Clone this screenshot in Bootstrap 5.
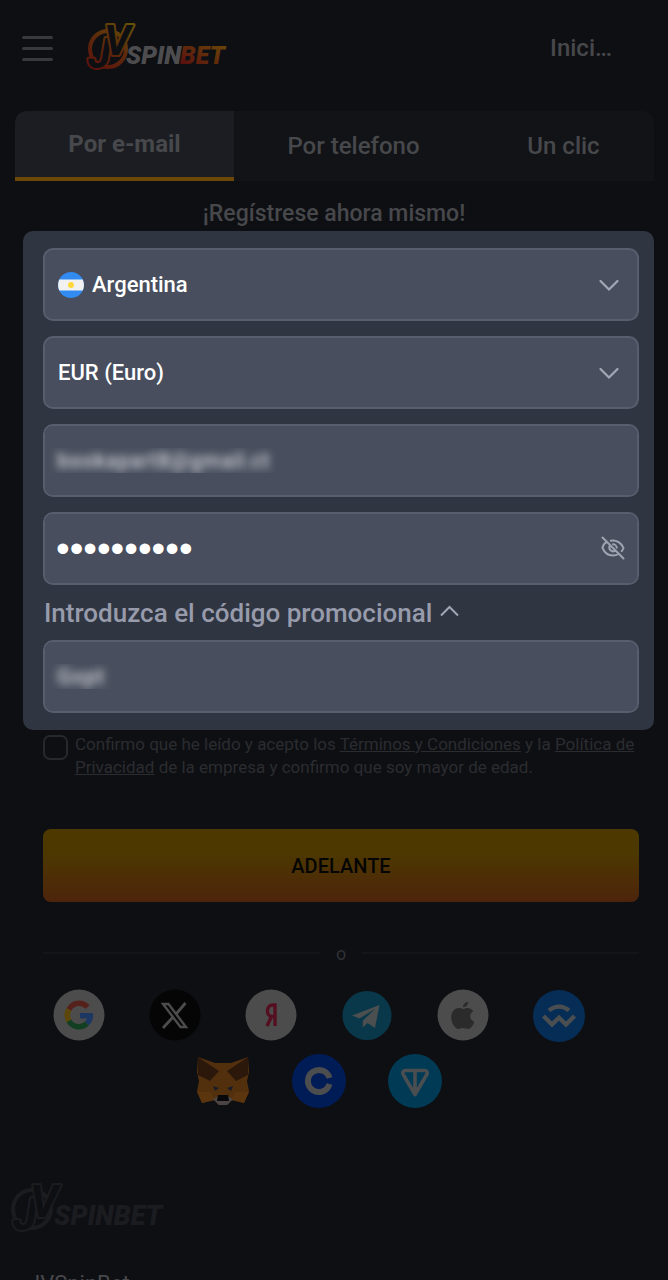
<!DOCTYPE html>
<html lang="es">
<head>
<meta charset="utf-8">
<meta name="viewport" content="width=device-width, initial-scale=1">
<title>JVSpinBet - Registro</title>
<link href="https://cdn.jsdelivr.net/npm/bootstrap@5.3.0/dist/css/bootstrap.min.css" rel="stylesheet">
<style>
  body { background: #0e0f13; font-family: Roboto, "Liberation Sans", sans-serif; color: #47484b; }
  .page { height: 100vh; overflow: hidden; }
  .top-bar { height: 96px; padding: 0 56px 0 22px; }
  .burger span { display: block; width: 31px; height: 3px; border-radius: 2px; background: #38393d; }
  .burger { gap: 8px; }
  .brand-link { margin-left: 32px; line-height: 0; }
  .login-link { color: #47484b; font-size: 24px; font-weight: 500; }
  .reg-tabs { margin: 15px 14px 0 15px; height: 70px; background: #121317; border-radius: 12px 12px 0 0; }
  .reg-tabs .nav-link { color: #47484b; background: transparent; font-size: 24px; font-weight: 500; border: 0; border-radius: 0; padding: 0; }
  .reg-tabs .nav-link.active { background: #1b1d22; border-bottom: 4px solid #6c4708; border-radius: 12px 0 0 0; font-weight: 700; }
  .tab-a { flex: 219 1 0; } .tab-b { flex: 239 1 0; } .tab-c { flex: 181 1 0; }
  .lead-line { font-size: 23px; font-weight: 500; line-height: 26px; margin: 20px 0 4px; }
  .panel { margin: 0 14px 0 23px; padding: 17px 15px 17px 20px; border-radius: 10px; background: #2f3541; }
  .field-stack { display: grid; gap: 15px; }
  .field { height: 73px; background-color: #484e5d; border: 2px solid #585e6e; border-radius: 10px; color: #fff; font-size: 22px; font-weight: 500; padding: 0 13px; }
  .field:focus { background-color: #484e5d; color: #fff; }
  select.field { background-image: url("data:image/svg+xml,%3Csvg xmlns='http://www.w3.org/2000/svg' viewBox='0 0 20 20'%3E%3Cpath d='M1.500 6l8.500 8.500L18.500 6' fill='none' stroke='%23a3a7b5' stroke-width='2.200' stroke-linecap='round'/%3E%3C/svg%3E"); background-size: 20px 20px; background-position: right 18px center; }
  select.with-flag { padding-left: 47px; }
  .flag { left: 15px; top: 24px; pointer-events: none; }
  .veiled, .veiled:focus { color: transparent; text-shadow: 0 0 9px #d5d7dc; padding-left: 0; text-indent: 12px; line-height: 69px; }
  .dots { font-family: "Liberation Sans", sans-serif; font-size: 39px; font-weight: 400; padding-left: 11px; }
  .eye-btn { right: 14px; top: 24px; line-height: 0; }
  .promo-btn { color: #979bab; font-size: 26px; font-weight: 500; line-height: 30px; gap: 8px; margin: 13px 0 12px 1px; }
  .below { margin: 0 29px 0 43px; }
  .terms { font-size: 17px; line-height: 23px; padding-top: 3px; color: #2b2c30; }
  .terms a { color: #2b2c30; }
  .form-check-input.terms-box { width: 25px; height: 25px; margin: 5px 7px 0 0; background-color: transparent; border: 2px solid #27282c; border-radius: 7px; }
  .go-btn { height: 73px; margin-top: 50px; border: 0; border-radius: 8px; background: linear-gradient(#4d3900 30%, #4d240c); color: #050505; font-size: 20px; font-weight: 500; }
  .or-line { margin-top: 38px; gap: 16px; height: 26px; font-size: 18px; color: #303135; }
  .or-line i { height: 2px; background: #141519; }
  .socials { margin: 16px 61px 0 30px; }
  .socials a { width: 96px; height: 66px; display: flex; align-items: center; justify-content: center; }
  .foot { padding: 65px 10px 0; }
  .foot p { font-size: 22px; line-height: 26px; margin: 32px 0 0 18px; }
</style>
</head>
<body>
<svg width="0" height="0" class="position-absolute" aria-hidden="true">
  <defs>
    <linearGradient id="fire" gradientUnits="userSpaceOnUse" x1="8" y1="56" x2="42" y2="4"><stop offset="0" stop-color="#5c100d"/><stop offset=".5" stop-color="#5d2a0b"/><stop offset="1" stop-color="#675208"/></linearGradient>
    <linearGradient id="bet" x1="0" y1="1" x2="1" y2="0"><stop offset=".15" stop-color="#5b120e"/><stop offset="1" stop-color="#6a4c08"/></linearGradient>
  </defs>
</svg>
<div class="page">
  <header class="top-bar d-flex align-items-center">
    <button class="burger btn p-0 border-0 d-flex flex-column" type="button" aria-label="Menú"><span></span><span></span><span></span></button>
    <a href="#" class="brand-link d-block" aria-label="JVSpinBet">
      <svg width="150" height="64" viewBox="0 0 150 64">
        <circle cx="23" cy="33" r="18" fill="none" stroke="url(#fire)" stroke-width="4"/>
        <g font-family="Roboto, sans-serif" font-style="italic">
          <g font-size="42" font-weight="700" fill="#0e0f13" stroke="url(#fire)" stroke-width="4" stroke-linejoin="round" paint-order="stroke"><text x="3" y="52">J</text><text x="19" y="39">V</text></g>
          <text x="41" y="48" font-size="25" font-weight="900" fill="#4d4d50">SPIN</text>
          <text x="95" y="48" font-size="25" font-weight="900" fill="url(#bet)">BET</text>
        </g>
      </svg>
    </a>
    <a href="#" class="login-link ms-auto text-decoration-none">Inici…</a>
  </header>

  <nav class="reg-tabs nav flex-nowrap" role="tablist">
    <button class="nav-link active tab-a" type="button" role="tab">Por e-mail</button>
    <button class="nav-link tab-b" type="button" role="tab">Por telefono</button>
    <button class="nav-link tab-c" type="button" role="tab">Un clic</button>
  </nav>

  <form>
    <p class="lead-line text-center">¡Regístrese ahora mismo!</p>
    <div class="panel">
      <div class="field-stack">
        <div class="position-relative">
          <select class="form-select field with-flag" aria-label="País"><option>Argentina</option></select>
          <svg class="flag position-absolute" width="26" height="26" viewBox="0 0 26 26"><circle cx="13" cy="13" r="13" fill="#318bf0"/><path d="M1.300 7.500h23.400a13 13 0 0 1 0 11H1.300a13 13 0 0 1 0-11z" fill="#f1f1f1"/><circle cx="13" cy="13" r="3" fill="#ffd83b"/></svg>
        </div>
        <select class="form-select field" aria-label="Moneda"><option>EUR (Euro)</option></select>
        <input class="form-control field veiled" type="email" aria-label="E-mail" value="bookapart8@gmail.ct">
        <div class="position-relative">
          <input class="form-control field dots" type="password" aria-label="Contraseña" value="1234567890">
          <button class="eye-btn btn p-0 border-0 position-absolute" type="button" aria-label="Mostrar contraseña">
            <svg width="24" height="24" viewBox="0 0 24 24" fill="none" stroke="#a0a4b2" stroke-width="2" stroke-linecap="round"><path d="M1.500 1.500l21 21M5.500 6C3.300 7.500 1.500 10 1.500 12c2 4.600 6 7.500 10.500 7.500 2 0 3.800-.5 5.400-1.500M9.800 4.700C15.500 3.700 20.700 7 22.500 12c-.4 1.200-1 2.200-1.800 3.200M9 9.500c-2 3 .8 7 4.700 5.500M12 8.300c2 0 3.700 1.700 3.700 3.400"/></svg>
          </button>
        </div>
      </div>
      <button class="promo-btn btn p-0 border-0 d-flex align-items-center" type="button">Introduzca el código promocional
        <svg width="19" height="16" viewBox="0 0 19 16" fill="none" stroke="#a3a7b5" stroke-width="2"><path d="M1 10.500l8.500-8.500 8.500 8.500"/></svg>
      </button>
      <input class="form-control field veiled" type="text" aria-label="Código promocional" value="Gopt">
    </div>

    <div class="below">
      <div class="d-flex">
        <input class="form-check-input terms-box flex-shrink-0" type="checkbox" id="terms">
        <label class="terms" for="terms">Confirmo que he leído y acepto los <a href="#">Términos y Condiciones</a> y la <a href="#">Política de Privacidad</a> de la empresa y confirmo que soy mayor de edad.</label>
      </div>
      <button class="go-btn btn w-100" type="submit">ADELANTE</button>
      <div class="or-line d-flex align-items-center"><i class="flex-fill"></i><span>o</span><i class="flex-fill"></i></div>
    </div>
  </form>

  <nav class="socials d-flex flex-wrap justify-content-center" aria-label="Otras formas de registro">
    <a href="#" aria-label="Google"><svg width="52" height="52" viewBox="0 0 52 52"><circle cx="26" cy="26" r="25.500" fill="#4c4c4c"/><g fill="none" stroke-width="5.500"><path d="M34.500 18a11.300 11.300 0 0 0-18.500 2.500" stroke="#56201b"/><path d="M16 20.500a11.300 11.300 0 0 0 0 11.500" stroke="#5c4709"/><path d="M16 32a11.300 11.300 0 0 0 17.800 2.500" stroke="#123f22"/><path d="M33.800 34.500c2.200-2 3.500-4.700 3.500-7.700H27" stroke="#1d3763"/></g></svg></a>
    <a href="#" aria-label="X"><svg width="52" height="52" viewBox="0 0 52 52"><circle cx="26" cy="26" r="25.500" fill="#050505"/><path d="M14 15h5.500L37 38h-5.500z" fill="none" stroke="#4c4c4c" stroke-width="2.400"/><path d="M36.500 14L27.500 24.500M23.600 28.500L14 39" stroke="#4c4c4c" stroke-width="2.800"/></svg></a>
    <a href="#" aria-label="Yandex"><svg width="52" height="52" viewBox="0 0 52 52"><circle cx="26" cy="26" r="25.500" fill="#4c4c4c"/><path d="M30 37V16h-2c-3.600 0-5.500 2.600-5.500 6 0 3.200 1.700 5.500 4.500 5.500h3M26.500 27.500L22 37" fill="none" stroke="#541020" stroke-width="3.400"/></svg></a>
    <a href="#" aria-label="Telegram"><svg width="52" height="52" viewBox="0 0 52 52"><circle cx="26" cy="26.500" r="24.500" fill="#08384a"/><path d="M11 26.500L38.500 16 34 39l-7.500-5-4.800 4.500.2-7L34 20 18.500 29.500z" fill="#4c4f50"/></svg></a>
    <a href="#" aria-label="Apple"><svg width="52" height="52" viewBox="0 0 52 52"><circle cx="26" cy="26" r="25.500" fill="#4c4c4c"/><path d="M26.500 20c2-1 6.800-2.600 9.800 2.200-4.600 3-3.800 8.600 1 10.800-1.500 3.800-3.800 7-6.200 7-1.800 0-2.600-1-4.800-1s-3.200 1-4.900 1c-3.700 0-7.200-6.500-7.200-11.700 0-6.500 4.300-9.200 7.500-9.200 2 0 3.500.6 4.800.9z" fill="#2b2b2b"/><path d="M26 18.300c-.2-2.800 2.200-5.200 5.200-5.500.2 3.200-2.300 5.400-5.200 5.500z" fill="#2b2b2b"/></svg></a>
    <a href="#" aria-label="WalletConnect"><svg width="54" height="54" viewBox="0 0 54 54"><circle cx="27" cy="28" r="26" fill="#062d56"/><g fill="none" stroke="#4b4e50" stroke-width="4.300"><path d="M17 22.500c6-5.300 14-5.300 20 0"/><path d="M11.500 28l8.500 8.500 7-6.800 7 6.800 8.500-8.500"/></g></svg></a>
    <a href="#" aria-label="MetaMask"><svg width="54" height="54" viewBox="0 0 54 54"><path d="M2 3l17 6h16l17-6 1 15-2 9 2 10-5 12-12-3-5 5h-8l-5-5-12 3-5-12 2-10-2-9z" fill="#53300d"/><path d="M2 3l21 14-9 10-12-6zM52 3L31 17l9 10 12-6z" fill="#2c180b"/><path d="M1 38h14l4 8-13 3zM53 38H39l-4 8 13 3z" fill="#5a350e"/><path d="M17 32l6 2-4 3zM37 32l-6 2 4 3z" fill="#191c27"/><path d="M17 45l6-3h8l6 3-6 6h-8z" fill="#4a4544"/><path d="M22 41h10l1 6H21z" fill="#08080a"/></svg></a>
    <a href="#" aria-label="Coinbase"><svg width="54" height="54" viewBox="0 0 54 54"><circle cx="27" cy="27" r="27" fill="#001c57"/><path d="M37.500 24a11 11 0 1 0 0 6" fill="none" stroke="#4b4d4e" stroke-width="6"/></svg></a>
    <a href="#" aria-label="TON"><svg width="54" height="54" viewBox="0 0 54 54"><circle cx="27" cy="27" r="27" fill="#003a55"/><path d="M17.500 16.500h19c2.600 0 3.500 2 2.300 4L27 40.500 15.200 20.500c-1.200-2-.3-4 2.300-4zM27 16.500V40" fill="none" stroke="#4b4e50" stroke-width="3.600" stroke-linejoin="round"/></svg></a>
  </nav>

  <footer class="foot">
    <a href="#" class="d-block lh-1" aria-label="JVSpinBet">
      <svg width="180" height="60" viewBox="0 0 180 60">
        <circle cx="22" cy="30" r="19" fill="none" stroke="#1b1c20" stroke-width="4"/>
        <g font-family="Roboto, sans-serif" font-style="italic">
          <g font-size="44" font-weight="700" fill="#0e0f13" stroke="#1b1c20" stroke-width="4" stroke-linejoin="round" paint-order="stroke"><text x="3" y="51">J</text><text x="20" y="38">V</text></g>
          <text x="44" y="46" font-size="27" font-weight="900" fill="#1b1c20">SPINBET</text>
        </g>
      </svg>
    </a>
    <p>JVSpinBet</p>
  </footer>
</div>
<script src="https://cdn.jsdelivr.net/npm/bootstrap@5.3.0/dist/js/bootstrap.bundle.min.js"></script>
</body>
</html>
